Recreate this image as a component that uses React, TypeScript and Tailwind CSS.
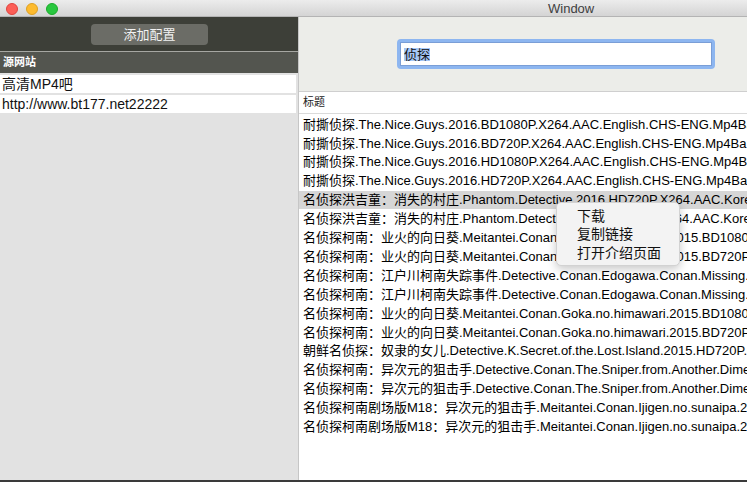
import React from 'react';

const SOURCES = ['高清MP4吧', 'http://www.bt177.net22222'];

const RESULTS = [
  '耐撕侦探.The.Nice.Guys.2016.BD1080P.X264.AAC.English.CHS-ENG.Mp4Ba.mp4',
  '耐撕侦探.The.Nice.Guys.2016.BD720P.X264.AAC.English.CHS-ENG.Mp4Ba.mp4',
  '耐撕侦探.The.Nice.Guys.2016.HD1080P.X264.AAC.English.CHS-ENG.Mp4Ba.mp4',
  '耐撕侦探.The.Nice.Guys.2016.HD720P.X264.AAC.English.CHS-ENG.Mp4Ba.mp4',
  '名侦探洪吉童：消失的村庄.Phantom.Detective.2016.HD720P.X264.AAC.Korean.CHS.Mp4Ba',
  '名侦探洪吉童：消失的村庄.Phantom.Detective.2016.BD720P.X264.AAC.Korean.CHS.Mp4Ba',
  '名侦探柯南：业火的向日葵.Meitantei.Conan.Goka.no.himawari.2015.BD1080P.X264',
  '名侦探柯南：业火的向日葵.Meitantei.Conan.Goka.no.himawari.2015.BD720P.X264',
  '名侦探柯南：江户川柯南失踪事件.Detective.Conan.Edogawa.Conan.Missing.2014',
  '名侦探柯南：江户川柯南失踪事件.Detective.Conan.Edogawa.Conan.Missing.2014',
  '名侦探柯南：业火的向日葵.Meitantei.Conan.Goka.no.himawari.2015.BD1080P.X264',
  '名侦探柯南：业火的向日葵.Meitantei.Conan.Goka.no.himawari.2015.BD720P.X264',
  '朝鲜名侦探：奴隶的女儿.Detective.K.Secret.of.the.Lost.Island.2015.HD720P.X264',
  '名侦探柯南：异次元的狙击手.Detective.Conan.The.Sniper.from.Another.Dimension',
  '名侦探柯南：异次元的狙击手.Detective.Conan.The.Sniper.from.Another.Dimension',
  '名侦探柯南剧场版M18：异次元的狙击手.Meitantei.Conan.Ijigen.no.sunaipa.2014',
  '名侦探柯南剧场版M18：异次元的狙击手.Meitantei.Conan.Ijigen.no.sunaipa.2014',
];

const MENU = ['下载', '复制链接', '打开介绍页面'];

export default function App() {
  return (
    <div className="relative w-[747px] h-[482px] overflow-hidden flex flex-col bg-[#2e2e2e] text-black font-['Liberation_Sans','Noto_Sans_CJK_SC',sans-serif]">
      {/* Title bar */}
      <div className="h-[17px] shrink-0 flex items-center bg-gradient-to-b from-[#ececec] to-[#d4d4d4] border-b border-[#b4b4b4]">
        <div className="flex gap-[8px] pl-[6px] pt-[1px]">
          <span className="w-[12px] h-[12px] rounded-full bg-[#fc5f57] border border-[#e0443e]" />
          <span className="w-[12px] h-[12px] rounded-full bg-[#fdbb2f] border border-[#dea123]" />
          <span className="w-[12px] h-[12px] rounded-full bg-[#29c73f] border border-[#1aab29]" />
        </div>
        <span className="ml-[490px] text-[13px] leading-none text-[#404040]">Window</span>
      </div>

      <div className="h-[463px] shrink-0 flex">
        {/* Left: source sites */}
        <div className="w-[298px] shrink-0 flex flex-col bg-[#e2e2e2]">
          <div className="h-[35px] flex items-center justify-center bg-[#3d3f38] border-b border-[#a6a7a2]">
            <button className="w-[117px] h-[21px] ml-[1px] rounded-[4px] bg-[#6b6c66] text-[13px] text-[#f2f2f2] leading-none">
              添加配置
            </button>
          </div>
          <div className="h-[22px] flex items-center px-[3px] bg-[#53554f] border-b border-[#e2e2e2] text-[11px] font-bold text-white">
            源网站
          </div>
          <div className="flex flex-col gap-[2px] pt-[1px]">
            {SOURCES.map((s) => (
              <div key={s} className="w-[296px] h-[18px] flex items-center px-[2px] bg-white text-[14px] text-[#111]">
                {s}
              </div>
            ))}
          </div>
        </div>

        {/* Right: search + results */}
        <div className="flex-1 min-w-0 flex flex-col border-l border-[#c6c6c6] bg-white">
          <div className="h-[75px] shrink-0 flex items-center pl-[98px] bg-[#ecede9] border-b border-[#cfcfcf]">
            <div className="w-[318px] h-[30px] p-[3px] rounded-[4px] bg-[#8db6f0]">
              <div className="w-full h-full flex items-center px-[3px] bg-white border border-[#7a9ed6]">
                <span className="bg-[#a6c8f7] text-[13px] leading-[13px] text-[#111]">侦探</span>
              </div>
            </div>
          </div>
          <div className="h-[22px] shrink-0 flex items-center px-[4px] border-b border-[#dadada] text-[11px] text-[#222]">
            标题
          </div>
          <div className="flex flex-col pt-[1px]">
            {RESULTS.map((r, i) => (
              <div
                key={i}
                className={`h-[18.9px] flex items-center px-[4px] whitespace-nowrap overflow-hidden text-[13px] ${i === 4 ? 'bg-[#d6d6d6]' : ''}`}
              >
                {r}
              </div>
            ))}
          </div>
        </div>
      </div>

      {/* Desktop strip under the window */}
      <div className="flex-1 bg-[#3a3a3a]" />

      {/* Context menu */}
      <div className="absolute left-[556px] top-[202px] w-[124px] h-[64px] pt-[4px] rounded-[5px] bg-[#f3f3f3] border border-[#d2d2d2] shadow-[0_3px_10px_rgba(0,0,0,0.22)]">
        {MENU.map((m) => (
          <div key={m} className="h-[18.5px] flex items-center pl-[20px] text-[14px] text-[#111]">
            {m}
          </div>
        ))}
      </div>
    </div>
  );
}
